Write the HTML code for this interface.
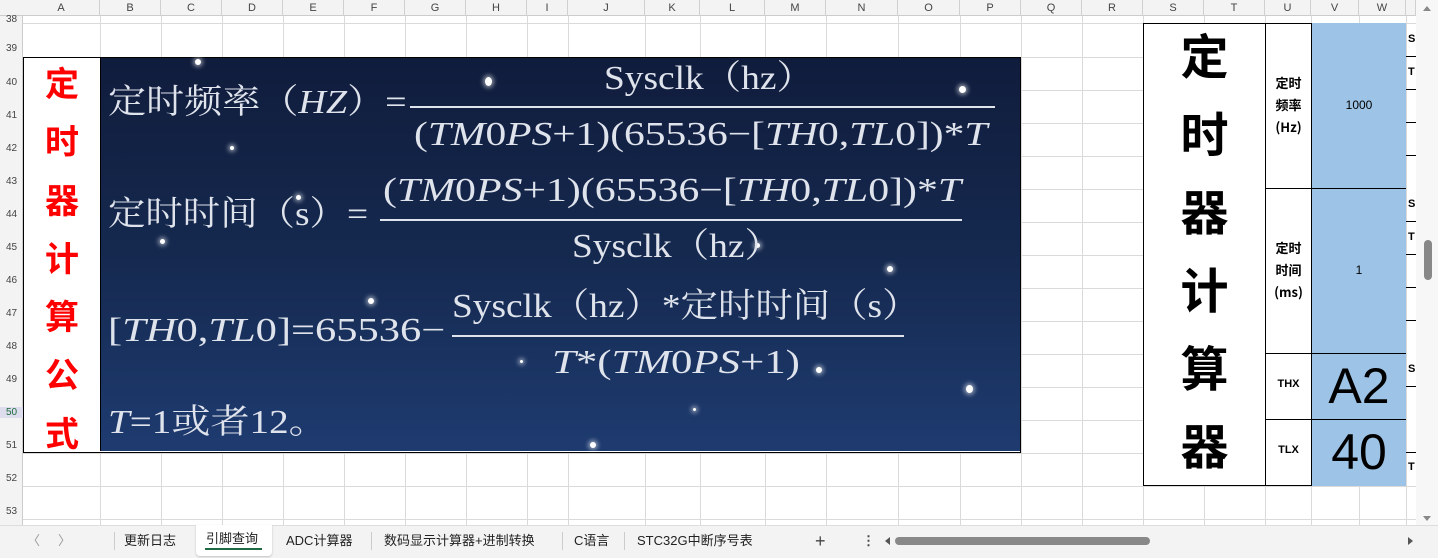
<!DOCTYPE html>
<html><head><meta charset="utf-8"><style>
*{margin:0;padding:0;box-sizing:border-box}
body{width:1438px;height:558px;overflow:hidden;background:#fff;position:relative;font-family:"Liberation Sans","Noto Sans CJK SC",sans-serif}
.a{position:absolute}
.vl{position:absolute;width:1px;background:#dadada}
.hl{position:absolute;height:1px;background:#dadada}
.ch{position:absolute;top:0;height:16px;font-size:11px;color:#444;text-align:center;line-height:16px;border-right:1px solid #d0d0d0}
.rh{position:absolute;left:0;width:23px;font-size:10px;color:#444;text-align:center}
.f{position:absolute;color:#dfe3ec;font-family:"Liberation Serif","Noto Serif CJK SC",serif;font-size:34px;white-space:nowrap;line-height:1;transform-origin:0 50%}
.f i{font-style:italic}
.fl{position:absolute;height:2px;background:#dfe3ec}
.st{position:absolute;border-radius:50%;background:#fff;box-shadow:0 0 4px 2px rgba(255,255,255,.5)}
.tab{position:absolute;top:527px;height:28px;line-height:28px;font-size:13px;color:#222;font-family:"Liberation Sans","Noto Sans CJK SC",sans-serif}
</style></head><body>
<div class="a" style="left:0;top:0;width:1416px;height:16px;background:#f3f3f3;border-bottom:1px solid #ccc"></div>
<div class="ch" style="left:23px;width:77px">A</div>
<div class="ch" style="left:100px;width:61px">B</div>
<div class="ch" style="left:161px;width:61px">C</div>
<div class="ch" style="left:222px;width:61px">D</div>
<div class="ch" style="left:283px;width:61px">E</div>
<div class="ch" style="left:344px;width:61px">F</div>
<div class="ch" style="left:405px;width:61px">G</div>
<div class="ch" style="left:466px;width:61px">H</div>
<div class="ch" style="left:527px;width:41px">I</div>
<div class="ch" style="left:568px;width:77px">J</div>
<div class="ch" style="left:645px;width:55px">K</div>
<div class="ch" style="left:700px;width:65px">L</div>
<div class="ch" style="left:765px;width:61px">M</div>
<div class="ch" style="left:826px;width:72px">N</div>
<div class="ch" style="left:898px;width:62px">O</div>
<div class="ch" style="left:960px;width:61px">P</div>
<div class="ch" style="left:1021px;width:61px">Q</div>
<div class="ch" style="left:1082px;width:61px">R</div>
<div class="ch" style="left:1143px;width:61px">S</div>
<div class="ch" style="left:1204px;width:61px">T</div>
<div class="ch" style="left:1265px;width:46px">U</div>
<div class="ch" style="left:1311px;width:48px">V</div>
<div class="ch" style="left:1359px;width:47px">W</div>
<div class="ch" style="left:1406px;width:10px"></div>
<div class="a" style="left:0;top:16px;width:23px;height:509px;background:#f3f3f3;border-right:1px solid #ccc"></div>
<div class="rh" style="top:14px">38</div>
<div class="rh" style="top:43px">39</div>
<div class="rh" style="top:77px">40</div>
<div class="rh" style="top:110px">41</div>
<div class="rh" style="top:143px">42</div>
<div class="rh" style="top:176px">43</div>
<div class="rh" style="top:209px">44</div>
<div class="rh" style="top:242px">45</div>
<div class="rh" style="top:275px">46</div>
<div class="rh" style="top:308px">47</div>
<div class="rh" style="top:341px">48</div>
<div class="rh" style="top:374px">49</div>
<div class="rh" style="top:407px;background:#dde;color:#1a6b3a">50</div>
<div class="rh" style="top:440px">51</div>
<div class="rh" style="top:473px">52</div>
<div class="rh" style="top:506px">53</div>
<div class="vl" style="left:100px;top:16px;height:509px"></div>
<div class="vl" style="left:161px;top:16px;height:509px"></div>
<div class="vl" style="left:222px;top:16px;height:509px"></div>
<div class="vl" style="left:283px;top:16px;height:509px"></div>
<div class="vl" style="left:344px;top:16px;height:509px"></div>
<div class="vl" style="left:405px;top:16px;height:509px"></div>
<div class="vl" style="left:466px;top:16px;height:509px"></div>
<div class="vl" style="left:527px;top:16px;height:509px"></div>
<div class="vl" style="left:568px;top:16px;height:509px"></div>
<div class="vl" style="left:645px;top:16px;height:509px"></div>
<div class="vl" style="left:700px;top:16px;height:509px"></div>
<div class="vl" style="left:765px;top:16px;height:509px"></div>
<div class="vl" style="left:826px;top:16px;height:509px"></div>
<div class="vl" style="left:898px;top:16px;height:509px"></div>
<div class="vl" style="left:960px;top:16px;height:509px"></div>
<div class="vl" style="left:1021px;top:16px;height:509px"></div>
<div class="vl" style="left:1082px;top:16px;height:509px"></div>
<div class="vl" style="left:1143px;top:16px;height:509px"></div>
<div class="vl" style="left:1204px;top:16px;height:509px"></div>
<div class="vl" style="left:1265px;top:16px;height:509px"></div>
<div class="vl" style="left:1311px;top:16px;height:509px"></div>
<div class="vl" style="left:1359px;top:16px;height:509px"></div>
<div class="vl" style="left:1406px;top:16px;height:509px"></div>
<div class="hl" style="left:23px;top:23px;width:1393px"></div>
<div class="hl" style="left:23px;top:57px;width:1120px"></div>
<div class="hl" style="left:23px;top:453px;width:1120px"></div>
<div class="hl" style="left:23px;top:486px;width:1393px"></div>
<div class="hl" style="left:23px;top:519px;width:1393px"></div>
<div class="hl" style="left:1021px;top:90px;width:122px"></div>
<div class="hl" style="left:1021px;top:123px;width:122px"></div>
<div class="hl" style="left:1021px;top:156px;width:122px"></div>
<div class="hl" style="left:1021px;top:189px;width:122px"></div>
<div class="hl" style="left:1021px;top:222px;width:122px"></div>
<div class="hl" style="left:1021px;top:255px;width:122px"></div>
<div class="hl" style="left:1021px;top:288px;width:122px"></div>
<div class="hl" style="left:1021px;top:321px;width:122px"></div>
<div class="hl" style="left:1021px;top:354px;width:122px"></div>
<div class="hl" style="left:1021px;top:387px;width:122px"></div>
<div class="hl" style="left:1021px;top:420px;width:122px"></div>
<div class="a" style="left:23px;top:57px;width:998px;height:396px;border:1px solid #000;background:#fff"></div>
<div class="a" style="left:24px;top:53px;width:76px;color:#f00;font-weight:bold;font-size:34px;line-height:58.3px;text-align:center;font-family:'Noto Sans CJK SC',sans-serif">定<br>时<br>器<br>计<br>算<br>公<br>式</div>
<div class="a" style="left:100px;top:58px;width:920px;height:393px;background:linear-gradient(180deg,#101c3c 0%,#15294f 50%,#1e3b70 100%);border-left:1px solid #000"></div>
<div class="st" style="left:195px;top:59px;width:6px;height:6px"></div>
<div class="st" style="left:485px;top:77px;width:7px;height:9px"></div>
<div class="st" style="left:959px;top:86px;width:7px;height:7px"></div>
<div class="st" style="left:160px;top:239px;width:5px;height:5px"></div>
<div class="st" style="left:296px;top:195px;width:5px;height:5px"></div>
<div class="st" style="left:368px;top:298px;width:6px;height:6px"></div>
<div class="st" style="left:755px;top:243px;width:5px;height:5px"></div>
<div class="st" style="left:887px;top:266px;width:6px;height:6px"></div>
<div class="st" style="left:966px;top:385px;width:7px;height:8px"></div>
<div class="st" style="left:816px;top:367px;width:6px;height:6px"></div>
<div class="st" style="left:590px;top:442px;width:6px;height:6px"></div>
<div class="st" style="left:693px;top:408px;width:3px;height:3px"></div>
<div class="st" style="left:230px;top:146px;width:4px;height:4px"></div>
<div class="st" style="left:520px;top:360px;width:3px;height:3px"></div>
<div class="f" style="left:108px;top:86px;transform:scaleX(1.12)">定时频率（<i>HZ</i>）=</div>
<div class="fl" style="left:410px;top:106px;width:585px"></div>
<div class="f" style="left:604px;top:62px;transform:scaleX(1.1)">Sysclk（hz）</div>
<div class="f" style="left:414px;top:118px;transform:scaleX(1.22)">(<i>TM</i>0<i>PS</i>+1)(65536−[<i>TH</i>0,<i>TL</i>0])*<i>T</i></div>
<div class="f" style="left:108px;top:198px;transform:scaleX(1.1)">定时时间（s）=</div>
<div class="fl" style="left:380px;top:219px;width:582px"></div>
<div class="f" style="left:383px;top:174px;transform:scaleX(1.23)">(<i>TM</i>0<i>PS</i>+1)(65536−[<i>TH</i>0,<i>TL</i>0])*<i>T</i></div>
<div class="f" style="left:572px;top:230px;transform:scaleX(1.1)">Sysclk（hz）</div>
<div class="f" style="left:108px;top:314px;transform:scaleX(1.25)">[<i>TH</i>0,<i>TL</i>0]=65536−</div>
<div class="fl" style="left:452px;top:335px;width:452px"></div>
<div class="f" style="left:452px;top:290px;transform:scaleX(1.1)">Sysclk（hz）*定时时间（s）</div>
<div class="f" style="left:552px;top:346px;transform:scaleX(1.26)"><i>T</i>*(<i>TM</i>0<i>PS</i>+1)</div>
<div class="f" style="left:108px;top:406px;transform:scaleX(1.15)"><i>T</i>=1或者12。</div>
<div class="a" style="left:1143px;top:23px;width:263px;height:463px;border:1px solid #000;background:#fff"></div>
<div class="a" style="left:1144px;top:14px;width:121px;color:#000;font-weight:bold;font-size:48px;line-height:78px;text-align:center;font-family:'Noto Sans CJK SC',sans-serif">定<br>时<br>器<br>计<br>算<br>器</div>
<div class="a" style="left:1265px;top:23px;width:1px;height:463px;background:#000"></div>
<div class="a" style="left:1311px;top:23px;width:95px;height:463px;background:#9dc3e6;border-left:1px solid #000"></div>
<div class="a" style="left:1265px;top:188px;width:141px;height:1px;background:#000"></div>
<div class="a" style="left:1265px;top:353px;width:141px;height:1px;background:#000"></div>
<div class="a" style="left:1265px;top:419px;width:141px;height:1px;background:#000"></div>
<div class="a" style="left:1266px;top:72px;width:45px;text-align:center;font-weight:bold;font-size:13px;line-height:22px;font-family:'Noto Sans CJK SC',sans-serif">定时<br>频率<br>(Hz)</div>
<div class="a" style="left:1266px;top:237px;width:45px;text-align:center;font-weight:bold;font-size:13px;line-height:22px;font-family:'Noto Sans CJK SC',sans-serif">定时<br>时间<br>(ms)</div>
<div class="a" style="left:1266px;top:378px;width:45px;text-align:center;font-weight:bold;font-size:11px">THX</div>
<div class="a" style="left:1266px;top:444px;width:45px;text-align:center;font-weight:bold;font-size:11px">TLX</div>
<div class="a" style="left:1312px;top:98px;width:94px;text-align:center;font-size:12px">1000</div>
<div class="a" style="left:1312px;top:263px;width:94px;text-align:center;font-size:12px">1</div>
<div class="a" style="left:1312px;top:357px;width:94px;text-align:center;font-size:50px;line-height:58px">A2</div>
<div class="a" style="left:1312px;top:423px;width:94px;text-align:center;font-size:50px;line-height:58px">40</div>
<div class="a" style="left:1406px;top:56px;width:10px;height:1px;background:#000"></div>
<div class="a" style="left:1406px;top:89px;width:10px;height:1px;background:#000"></div>
<div class="a" style="left:1406px;top:122px;width:10px;height:1px;background:#000"></div>
<div class="a" style="left:1406px;top:155px;width:10px;height:1px;background:#000"></div>
<div class="a" style="left:1406px;top:221px;width:10px;height:1px;background:#000"></div>
<div class="a" style="left:1406px;top:254px;width:10px;height:1px;background:#000"></div>
<div class="a" style="left:1406px;top:287px;width:10px;height:1px;background:#000"></div>
<div class="a" style="left:1406px;top:320px;width:10px;height:1px;background:#000"></div>
<div class="a" style="left:1406px;top:386px;width:10px;height:1px;background:#000"></div>
<div class="a" style="left:1406px;top:452px;width:10px;height:1px;background:#000"></div>
<div class="a" style="left:1408px;top:33px;font-size:11px;font-weight:bold">S</div>
<div class="a" style="left:1408px;top:66px;font-size:11px;font-weight:bold">T</div>
<div class="a" style="left:1408px;top:198px;font-size:11px;font-weight:bold">S</div>
<div class="a" style="left:1408px;top:231px;font-size:11px;font-weight:bold">T</div>
<div class="a" style="left:1408px;top:363px;font-size:11px;font-weight:bold">S</div>
<div class="a" style="left:1408px;top:461px;font-size:11px;font-weight:bold">T</div>
<div class="a" style="left:1416px;top:0;width:22px;height:525px;background:#f7f7f7"></div>
<div class="a" style="left:1423px;top:6px;width:0;height:0;border-left:4px solid transparent;border-right:4px solid transparent;border-bottom:5px solid #888"></div>
<div class="a" style="left:1424px;top:240px;width:8px;height:40px;border-radius:4px;background:#888"></div>
<div class="a" style="left:1423px;top:516px;width:0;height:0;border-left:4px solid transparent;border-right:4px solid transparent;border-top:5px solid #888"></div>
<div class="a" style="left:0;top:525px;width:1438px;height:33px;background:#f3f3f3;border-top:1px solid #ddd"></div>
<div class="tab" style="left:27px;color:#999">〈</div>
<div class="tab" style="left:58px;color:#999">〉</div>
<div class="tab" style="left:124px">更新日志</div>
<div class="a" style="left:114px;top:532px;width:1px;height:18px;background:#ccc"></div>
<div class="a" style="left:196px;top:525px;width:76px;height:31px;background:#fff;border-radius:0 0 4px 4px;box-shadow:0 1px 2px rgba(0,0,0,.2)"></div>
<div class="tab" style="left:206px;top:525px">引脚查询</div>
<div class="a" style="left:205px;top:548px;width:57px;height:2px;background:#1e6b43"></div>
<div class="tab" style="left:286px">ADC计算器</div>
<div class="a" style="left:371px;top:532px;width:1px;height:18px;background:#ccc"></div>
<div class="tab" style="left:384px">数码显示计算器+进制转换</div>
<div class="a" style="left:562px;top:532px;width:1px;height:18px;background:#ccc"></div>
<div class="tab" style="left:574px">C语言</div>
<div class="a" style="left:624px;top:532px;width:1px;height:18px;background:#ccc"></div>
<div class="tab" style="left:637px">STC32G中断序号表</div>
<div class="tab" style="left:815px;font-size:18px;color:#444">+</div>
<div class="tab" style="left:862px;color:#444;font-weight:bold">⋮</div>
<div class="a" style="left:885px;top:537px;width:0;height:0;border-top:4px solid transparent;border-bottom:4px solid transparent;border-right:5px solid #555"></div>
<div class="a" style="left:895px;top:537px;width:255px;height:8px;border-radius:4px;background:#888"></div>
<div class="a" style="left:1408px;top:537px;width:0;height:0;border-top:4px solid transparent;border-bottom:4px solid transparent;border-left:5px solid #555"></div>
</body></html>
